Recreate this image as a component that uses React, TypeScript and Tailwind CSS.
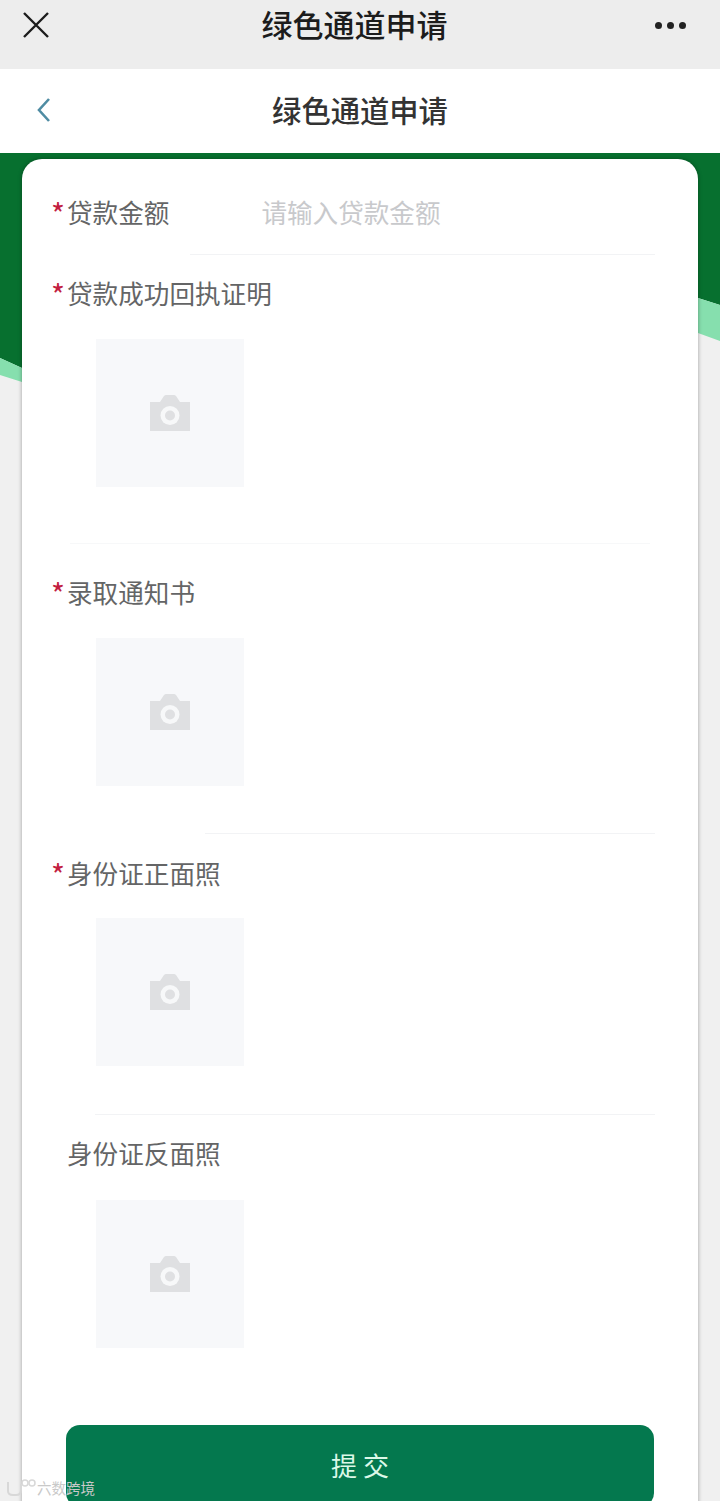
import React from "react";

const FONT = { fontFamily: '"Noto Sans CJK SC", "Liberation Sans", sans-serif' };

function CameraIcon() {
  return (
    <svg width="42" height="38" viewBox="0 0 42 38" aria-hidden="true">
      <path d="M1 8h10l4-6q1-1 2-1h8q1 0 2 1l4 6h10v29H1z" fill="#dfe0e2" />
      <circle cx="21" cy="21.5" r="9.5" fill="#f7f8f9" />
      <circle cx="21" cy="21.5" r="5" fill="#dfe0e2" />
    </svg>
  );
}

function Upload() {
  return (
    <div className="ml-[74px] flex h-[148px] w-[148px] items-center justify-center bg-[#f7f8fa]">
      <CameraIcon />
    </div>
  );
}

function Divider({ left, className = "" }: { left: string; className?: string }) {
  return <div className={`h-px ${left} ${className}`} />;
}

function Label({ text, required = true }: { text: string; required?: boolean }) {
  return (
    <div className="flex h-[36px] items-start pl-[29px] text-[25.6px] leading-[32px] text-[#646566]">
      <span className="w-[16px] text-[30px] leading-[34px] text-[#c2203f]">{required ? "*" : ""}</span>
      <span>{text}</span>
    </div>
  );
}

export default function App() {
  return (
    <div style={FONT} className="relative flex h-[1501px] w-[720px] flex-col overflow-hidden bg-[#f0f0f0]">
      <div className="flex h-[69px] shrink-0 items-start justify-between bg-[#ededed] px-[22px] pt-[8px]">
        <svg width="28" height="28" viewBox="0 0 28 28" className="mt-[3px]" aria-hidden="true">
          <path d="M2 2l24 24M26 2L2 26" stroke="#1c1c1c" strokeWidth="2.4" fill="none" />
        </svg>
        <div className="-mt-[2px] ml-[4px] text-[31px] font-medium leading-[36px] text-[#1c1c1c]">绿色通道申请</div>
        <div className="mr-[12px] mt-[14px] flex gap-[5px]">
          <span className="h-[7px] w-[7px] rounded-full bg-[#222222]" />
          <span className="h-[7px] w-[7px] rounded-full bg-[#222222]" />
          <span className="h-[7px] w-[7px] rounded-full bg-[#222222]" />
        </div>
      </div>

      <div className="relative flex h-[84px] shrink-0 items-center justify-center bg-white">
        <svg width="16" height="26" viewBox="0 0 16 26" className="absolute left-[36px] top-[28px]" aria-hidden="true">
          <path d="M13 2L3 13l10 11" stroke="#4f8ca3" strokeWidth="2.6" fill="none" />
        </svg>
        <div className="-mt-[4px] text-[29.3px] font-medium leading-[36px] text-[#333333]">绿色通道申请</div>
      </div>

      <div className="relative min-h-0 flex-1">
        <svg className="absolute left-0 top-0" width="720" height="240" viewBox="0 0 720 240" aria-hidden="true">
          <path d="M0 0H720V152L698 145Q360 100 100 170Q40 188 22 215L0 205Z" fill="#07702f" />
          <path d="M720 152V188L698 180Q400 130 180 190Q60 220 22 229L0 222V205L22 215Q200 120 400 120Q600 120 698 145Z" fill="#86dfae" />
        </svg>
        <div className="relative mx-[22px] mt-[6px] h-[1400px] rounded-t-[20px] bg-white pt-[37px] shadow-[0_0_4px_rgba(0,0,0,0.35)]">
          <div className="flex items-start">
            <Label text="贷款金额" />
            <span className="ml-[92px] text-[25.6px] leading-[32px] text-[#c8c9cc]">请输入贷款金额</span>
          </div>
          <Divider left="ml-[168px] mr-[43px] bg-[#f2f3f5]" className="mt-[22px]" />

          <div className="mt-[22px]"><Label text="贷款成功回执证明" /></div>
          <div className="mt-[26px]"><Upload /></div>
          <Divider left="ml-[48px] mr-[48px] bg-[#f7f8f9]" className="mt-[56px]" />

          <div className="mt-[32px]"><Label text="录取通知书" /></div>
          <div className="mt-[26px]"><Upload /></div>
          <Divider left="ml-[183px] mr-[43px] bg-[#f2f3f5]" className="mt-[47px]" />

          <div className="mt-[23px]"><Label text="身份证正面照" /></div>
          <div className="mt-[25px]"><Upload /></div>
          <Divider left="ml-[73px] mr-[43px] bg-[#f2f3f5]" className="mt-[48px]" />

          <div className="mt-[22px]"><Label text="身份证反面照" required={false} /></div>
          <div className="mt-[27px]"><Upload /></div>

          <button className="ml-[44px] mt-[77px] flex h-[82px] w-[588px] items-start justify-center rounded-[14px] bg-[#04784e] pl-[6px] pt-[20px] text-[26px] leading-[40px] tracking-[6px] text-[#dcf8e8]">
            提交
          </button>
        </div>
      </div>

      <div className="absolute bottom-[4px] left-[6px] flex items-center gap-[1px] text-[14.5px] leading-[18px]">
        <svg width="30" height="18" viewBox="0 0 30 18" aria-hidden="true">
          <path d="M2 3v9q0 4 5 4h3q5 0 5-5V5" stroke="#d8d8d8" strokeWidth="2" fill="none" />
          <circle cx="19" cy="4" r="3" stroke="#d8d8d8" strokeWidth="1.5" fill="none" />
          <circle cx="26" cy="4" r="3" stroke="#d8d8d8" strokeWidth="1.5" fill="none" />
        </svg>
        <span className="text-[#c9c9c9]">六数跨境</span>
      </div>
    </div>
  );
}
